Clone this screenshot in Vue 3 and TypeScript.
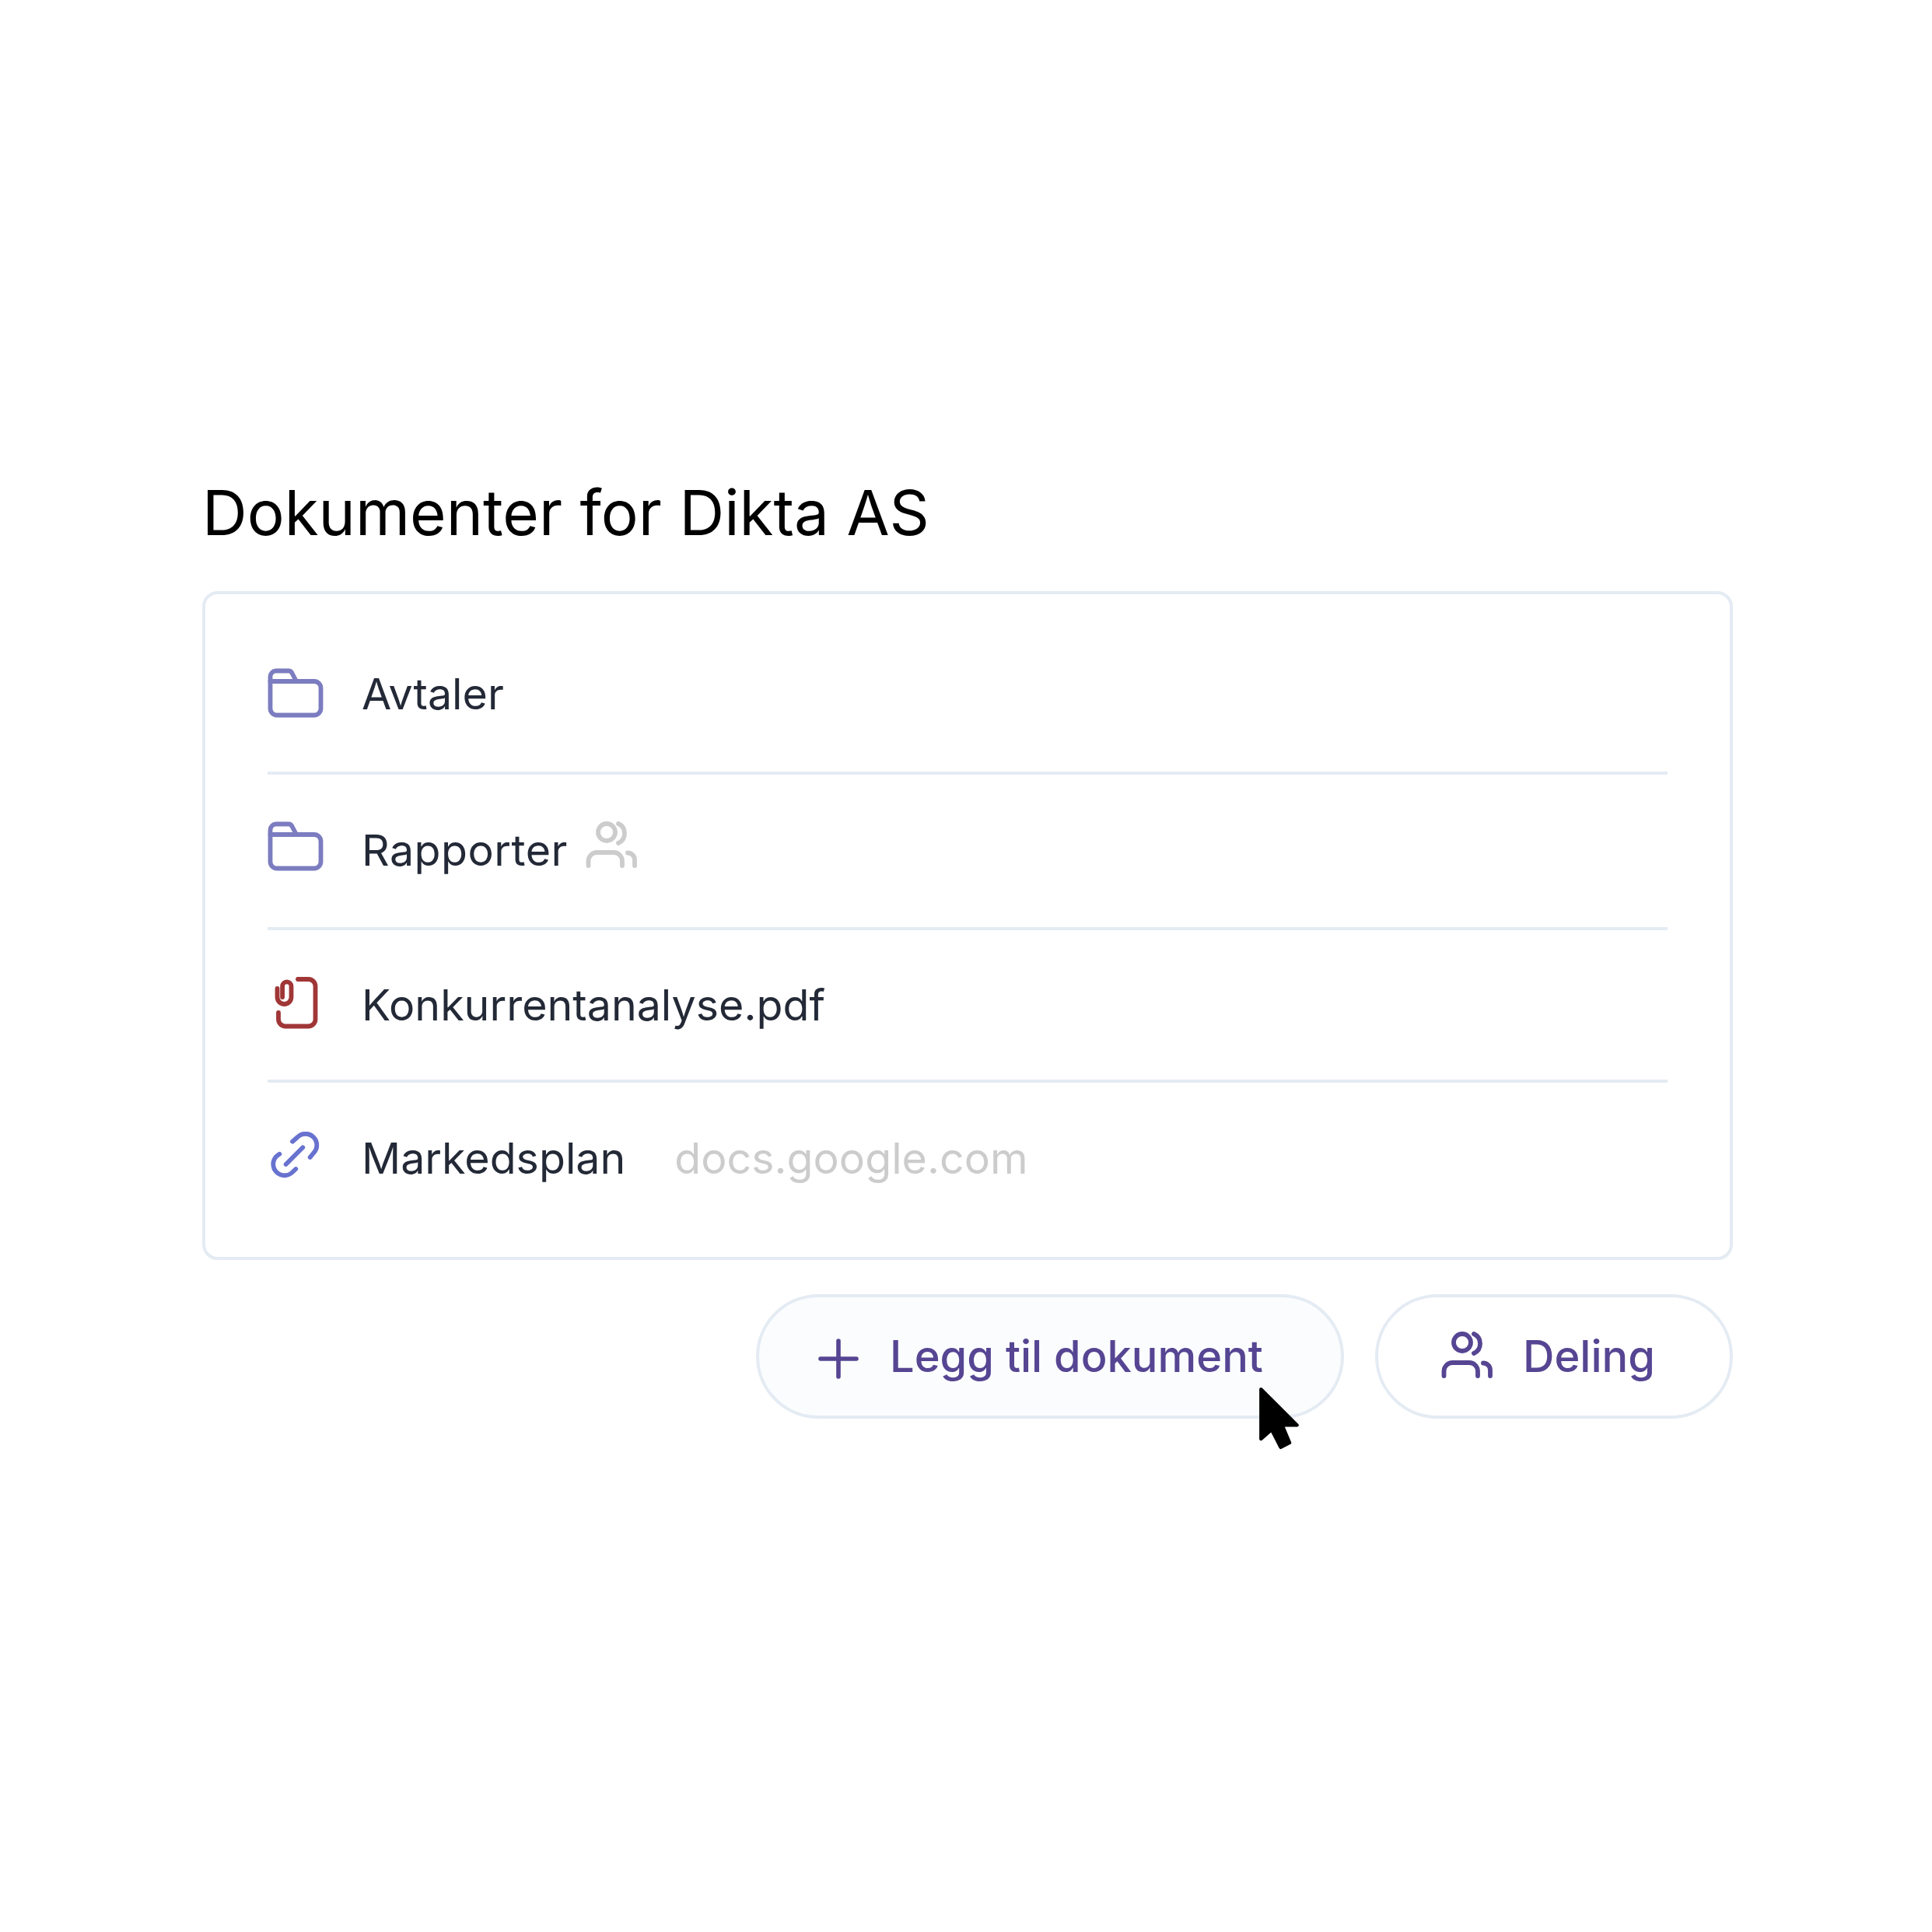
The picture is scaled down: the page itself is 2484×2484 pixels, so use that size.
<script setup lang="ts">
interface Row {
  kind: 'folder' | 'clip' | 'link'
  name: string
  shared?: boolean
  host?: string
}
const rows: Row[] = [
  { kind: 'folder', name: 'Avtaler' },
  { kind: 'folder', name: 'Rapporter', shared: true },
  { kind: 'clip', name: 'Konkurrentanalyse.pdf' },
  { kind: 'link', name: 'Markedsplan', host: 'docs.google.com' },
]
</script>

<template>
  <main class="page">
    <h1 class="title">Dokumenter for Dikta AS</h1>
    <section class="card">
      <div v-for="row in rows" :key="row.name" class="row">
        <svg class="icon" :class="row.kind" viewBox="0 0 72 72" fill="none" stroke="currentColor" stroke-width="5.8" stroke-linecap="round" stroke-linejoin="round">
          <template v-if="row.kind === 'folder'">
            <path d="M3.5 19V13a7.5 7.5 0 0 1 7.5-7.5H27a5 5 0 0 1 4.5 3L37 19H60a8.5 8.5 0 0 1 8.5 8.5V54a8.5 8.5 0 0 1-8.5 8.5H12A8.5 8.5 0 0 1 3.5 54Z" />
            <path d="M3.5 19H37" />
          </template>
          <template v-else-if="row.kind === 'clip'">
            <path d="M12.5 15V26a9 9 0 0 0 18 0V12a5.7 5.7 0 0 0-11.4 0V26" />
            <path d="M39 3H52.5a9 9 0 0 1 9 9V54.5a9 9 0 0 1-9 9H23a9 9 0 0 1-9-9V46" />
          </template>
          <template v-else>
            <path d="M32 12.7 38.8 6.75A14.5 14.5 0 0 1 59.3 27.25L54.6 33" />
            <path d="M15.3 28.7 11.3 31.75A14.5 14.5 0 0 0 31.8 52.25L36.3 48" />
            <path d="M23.6 42 45.3 20.3" />
          </template>
        </svg>
        <span class="name">{{ row.name }}</span>
        <svg v-if="row.shared" class="shared" viewBox="0 0 72 72" fill="none" stroke="currentColor" stroke-width="5.8" stroke-linecap="round" stroke-linejoin="round">
          <circle cx="28" cy="18" r="11" />
          <path d="M43 7A13.75 13.75 0 0 1 43 32" />
          <path d="M4.5 61V55A11 11 0 0 1 15.5 44H37A11 11 0 0 1 48 55V61" />
          <path d="M55 44.5A9 9 0 0 1 64 53.5V61" />
        </svg>
        <span v-if="row.host" class="host">{{ row.host }}</span>
      </div>
    </section>
    <div class="actions">
      <button type="button" class="btn add">
        <svg class="plus" viewBox="0 0 52 52" fill="none" stroke="currentColor" stroke-width="5.6" stroke-linecap="round">
          <path d="M26 3V49M3 26H49" />
        </svg>
        <span>Legg til dokument</span>
        <svg class="cursor" viewBox="0 0 52 84" preserveAspectRatio="none" fill="#000" stroke="#000" stroke-width="4" stroke-linejoin="round">
          <path d="M4 3 48 50H30L39 73 28 79 17 56 4 68Z" />
        </svg>
      </button>
      <button type="button" class="btn share">
        <svg class="icon" viewBox="0 0 72 72" fill="none" stroke="currentColor" stroke-width="5.8" stroke-linecap="round" stroke-linejoin="round">
          <circle cx="28" cy="18" r="11" />
          <path d="M43 7A13.75 13.75 0 0 1 43 32" />
          <path d="M4.5 61V55A11 11 0 0 1 15.5 44H37A11 11 0 0 1 48 55V61" />
          <path d="M55 44.5A9 9 0 0 1 64 53.5V61" />
        </svg>
        <span>Deling</span>
      </button>
    </div>
  </main>
</template>

<style>
html, body { background: #fff; }
</style>

<style scoped>
.page {
  box-sizing: border-box;
  width: 2484px;
  height: 2484px;
  padding: 611px 256px 0 260px;
  font-family: Inter, "Liberation Sans", sans-serif;
}
.title {
  margin: 0 0 53px;
  font-size: 80px;
  line-height: 96px;
  font-weight: 400;
  color: #000;
}
.card {
  box-sizing: border-box;
  padding: 28px 80px 30px;
  border: 4px solid #e4ebf3;
  border-radius: 20px;
}
.row {
  display: flex;
  align-items: center;
  border-bottom: 4px solid #e4ebf3;
}
.row:nth-child(1) { height: 200px; }
.row:nth-child(2) { height: 196px; }
.row:nth-child(3) { height: 192px; }
.row:nth-child(4) { height: 194px; border-bottom: 0; }
.row:nth-child(1) .icon { margin-top: 2px; }
.row:nth-child(2) .icon { margin-top: -8px; }
.row:nth-child(2) .name { margin-top: -2px; letter-spacing: 0.5px; }
.row:nth-child(4) .icon { margin-top: 3px; }
.icon { flex: none; width: 72px; height: 72px; }
.folder { color: #7c7cc0; }
.clip { color: #a03636; }
.link { color: #6872cf; }
.name {
  margin-left: 49px;
  font-size: 55.5px;
  line-height: 68px;
  color: #232936;
}
.shared { width: 72px; height: 72px; margin: -12px 0 0 22.5px; color: #cccccc; }
.host { margin-left: 63px; font-size: 55.5px; line-height: 68px; color: #cccccc; }
.actions {
  display: flex;
  justify-content: flex-end;
  gap: 40px;
  margin-top: 44px;
}
.btn {
  position: relative;
  box-sizing: border-box;
  display: flex;
  align-items: center;
  height: 160px;
  border: 4px solid #e4ebf3;
  border-radius: 80px;
  background: #fff;
  font-family: inherit;
  font-size: 56px;
  font-weight: 500;
  color: #564592;
}
.add { width: 756px; padding: 0 0 0 76px; background: #fafcfe; }
.plus { flex: none; width: 52px; height: 52px; margin: 6px 40px 0 0; }
.share { width: 460px; padding: 0 0 0 80px; }
.share span { margin-left: 34px; }
.cursor { position: absolute; left: 640.5px; top: 115px; width: 55px; height: 83px; }
</style>
